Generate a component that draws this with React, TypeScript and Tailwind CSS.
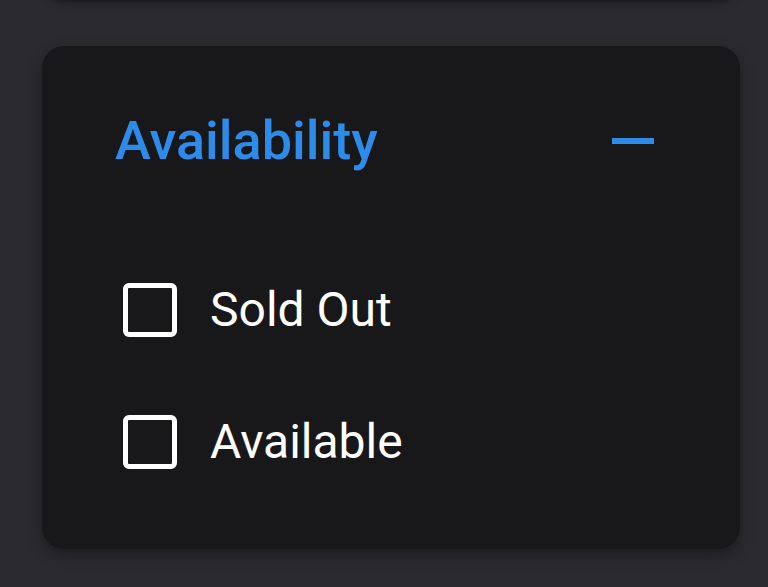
import { useState } from "react";

type Option = { id: string; label: string };

const options: Option[] = [
  { id: "sold-out", label: "Sold Out" },
  { id: "available", label: "Available" },
];

// Square outline checkbox; the tick only shows once it is checked.
function Box({ checked }: { checked: boolean }) {
  return (
    <span className="flex h-[54px] w-[54px] shrink-0 items-center justify-center rounded-[6px] border-[5px] border-white">
      {checked && (
        <svg viewBox="0 0 24 24" className="h-8 w-8" fill="none" stroke="white" strokeWidth={3}>
          <path d="M5 12.5l4.5 4.5L19 7.5" strokeLinecap="round" strokeLinejoin="round" />
        </svg>
      )}
    </span>
  );
}

export default function App() {
  const [picked, setPicked] = useState<string[]>([]);
  const [open, setOpen] = useState(true);

  const toggle = (id: string) =>
    setPicked((p) => (p.includes(id) ? p.filter((x) => x !== id) : [...p, id]));

  return (
    <div
      className="min-h-[587px] overflow-hidden bg-[#2b2a30] pl-[42px] pr-[28px]"
      style={{ fontFamily: "Roboto, 'Noto Sans', sans-serif" }}
    >
      {/* bottom edge of the previous filter card */}
      <div className="-mt-[30px] mb-[46px] h-[30px] rounded-b-[22px] bg-[#2a2930] shadow-[0_2px_8px_rgba(0,0,0,0.45)]" />

      <section className="rounded-[22px] bg-[#18181b] pb-[80px] pl-[73px] pr-[86px] pt-[68px] shadow-[0_6px_14px_rgba(0,0,0,0.35)]">
        <button
          type="button"
          onClick={() => setOpen((o) => !o)}
          className="flex w-full items-center justify-between"
        >
          <span className="text-[54px] font-medium leading-none text-[#2d8cea]">
            Availability
          </span>
          <span className="h-[6px] w-[42px] bg-[#2d8cea]" />
        </button>

        {open && (
          <ul className="mt-[115px] flex flex-col gap-[78px] pl-[8px]">
            {options.map((o) => (
              <li key={o.id}>
                <label
                  className="flex h-[54px] cursor-pointer items-center gap-[33px]"
                  onClick={() => toggle(o.id)}
                >
                  <Box checked={picked.includes(o.id)} />
                  <span className="text-[48px] leading-none text-white">{o.label}</span>
                </label>
              </li>
            ))}
          </ul>
        )}
      </section>
    </div>
  );
}
